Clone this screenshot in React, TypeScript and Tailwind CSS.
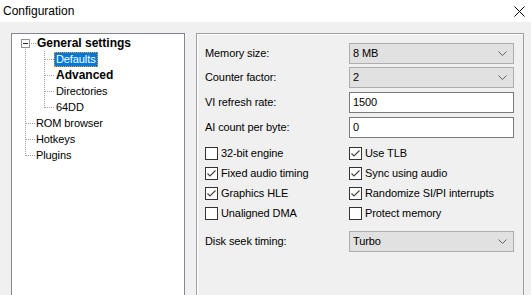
import React from "react";

const font = { fontFamily: '"Segoe UI", "Liberation Sans", sans-serif' };

function Chevron() {
  return (
    <svg width="9" height="5" viewBox="0 0 9 5" className="block">
      <path d="M0.5 0.5 L4.5 4.5 L8.5 0.5" fill="none" stroke="#606060" strokeWidth="1" />
    </svg>
  );
}

function Select({ value }: { value: string }) {
  return (
    <div className="w-[165px] h-[21px] border border-[#adadad] bg-[#e1e1e1] flex items-center justify-between pl-[3px] pr-[6px]">
      <span>{value}</span>
      <Chevron />
    </div>
  );
}

function Input({ value }: { value: string }) {
  return (
    <div className="w-[165px] h-[21px] border border-[#7a7a7a] bg-white flex items-center pl-[3px]">
      <span>{value}</span>
    </div>
  );
}

function Check({ checked, label }: { checked: boolean; label: string }) {
  return (
    <div className="h-[20px] flex items-start">
      <div className="mt-[1px] w-[13px] h-[13px] border border-[#333333] bg-white flex items-center justify-center shrink-0">
        {checked && (
          <svg width="11" height="11" viewBox="0 0 11 11" className="block">
            <path d="M1.5 5.5 L4 8 L9.5 2.5" fill="none" stroke="#404040" strokeWidth="1.1" />
          </svg>
        )}
      </div>
      <span className="ml-[3px] leading-[15px]">{label}</span>
    </div>
  );
}

function TreeRow({ indent, bold, selected, children }: { indent: number; bold?: boolean; selected?: boolean; children: React.ReactNode }) {
  return (
    <div className="h-[16px] flex items-center" style={{ paddingLeft: indent }}>
      {selected ? (
        <span className="h-[15px] leading-[13px] px-[1px] bg-[#0078d7] text-white border border-dotted border-[#ff9a28]">{children}</span>
      ) : (
        <span className={bold ? "font-bold px-[2px] text-[12px] tracking-normal" : "px-[2px]"}>{children}</span>
      )}
    </div>
  );
}

export default function App() {
  const ox = 12;
  const oy = 34;
  const dot = "#a0a0a0";
  const hl = (x1: number, x2: number, y: number) => (
    <line x1={x1 - ox} x2={x2 - ox + 1} y1={y - oy + 0.5} y2={y - oy + 0.5} stroke={dot} strokeDasharray="1 1" />
  );
  const vl = (x: number, y1: number, y2: number) => (
    <line x1={x - ox + 0.5} x2={x - ox + 0.5} y1={y1 - oy} y2={y2 - oy + 1} stroke={dot} strokeDasharray="1 1" />
  );
  return (
    <div className="w-[531px] h-[295px] bg-[#f0f0f0] overflow-hidden text-[11px] tracking-[-0.1px] text-black" style={font}>
      <div className="h-[22px] bg-white flex items-center justify-between pl-[3px] pr-[6px]">
        <span className="leading-[18px] text-[12px] tracking-normal">Configuration</span>
        <svg width="11" height="11" viewBox="0 0 11 11" className="block">
          <path d="M0.5 0.5 L10.5 10.5 M10.5 0.5 L0.5 10.5" stroke="#000" strokeWidth="1" />
        </svg>
      </div>
      <div className="flex pl-[11px] pt-[11px] gap-[11px]">
        <div className="relative w-[174px] h-[300px] bg-white border border-[#828790] pt-[1px]">
          <svg className="absolute left-0 top-0" width="172" height="200" shapeRendering="crispEdges">
            {vl(25, 49, 155)}
            {hl(31, 35, 43)}
            {hl(26, 35, 123)}
            {hl(26, 35, 139)}
            {hl(26, 35, 155)}
            {vl(44, 51, 107)}
            {hl(45, 53, 59)}
            {hl(45, 53, 75)}
            {hl(45, 53, 91)}
            {hl(45, 53, 107)}
            <rect x={21 - ox + 0.5} y={39 - oy + 0.5} width="8" height="8" fill="#fdfdfd" stroke="#919191" />
            <line x1={23 - ox} x2={28 - ox} y1={43 - oy + 0.5} y2={43 - oy + 0.5} stroke="#2a2a2a" />
          </svg>
          <div className="relative">
            <TreeRow indent={23} bold>General settings</TreeRow>
            <TreeRow indent={42} selected>Defaults</TreeRow>
            <TreeRow indent={42} bold>Advanced</TreeRow>
            <TreeRow indent={42}>Directories</TreeRow>
            <TreeRow indent={42}>64DD</TreeRow>
            <TreeRow indent={22}>ROM browser</TreeRow>
            <TreeRow indent={22}>Hotkeys</TreeRow>
            <TreeRow indent={22}>Plugins</TreeRow>
          </div>
        </div>
        <div className="w-[328px] h-[300px] border border-[#a0a0a0] shadow-[inset_1px_1px_0_#ffffff] pl-[8px] pt-[9px]">
          <div className="flex flex-col gap-[3px]">
            <div className="flex items-center">
              <span className="w-[144px]">Memory size:</span>
              <Select value="8 MB" />
            </div>
            <div className="flex items-center">
              <span className="w-[144px]">Counter factor:</span>
              <Select value="2" />
            </div>
            <div className="flex items-center mt-[1px]">
              <span className="w-[144px]">VI refresh rate:</span>
              <Input value="1500" />
            </div>
            <div className="flex items-center mt-[1px]">
              <span className="w-[144px]">AI count per byte:</span>
              <Input value="0" />
            </div>
          </div>
          <div className="grid grid-cols-[144px_1fr] mt-[8px]">
            <Check checked={false} label="32-bit engine" />
            <Check checked label="Use TLB" />
            <Check checked label="Fixed audio timing" />
            <Check checked label="Sync using audio" />
            <Check checked label="Graphics HLE" />
            <Check checked label="Randomize SI/PI interrupts" />
            <Check checked={false} label="Unaligned DMA" />
            <Check checked={false} label="Protect memory" />
          </div>
          <div className="flex items-center mt-[5px]">
            <span className="w-[144px]">Disk seek timing:</span>
            <Select value="Turbo" />
          </div>
        </div>
      </div>
    </div>
  );
}
